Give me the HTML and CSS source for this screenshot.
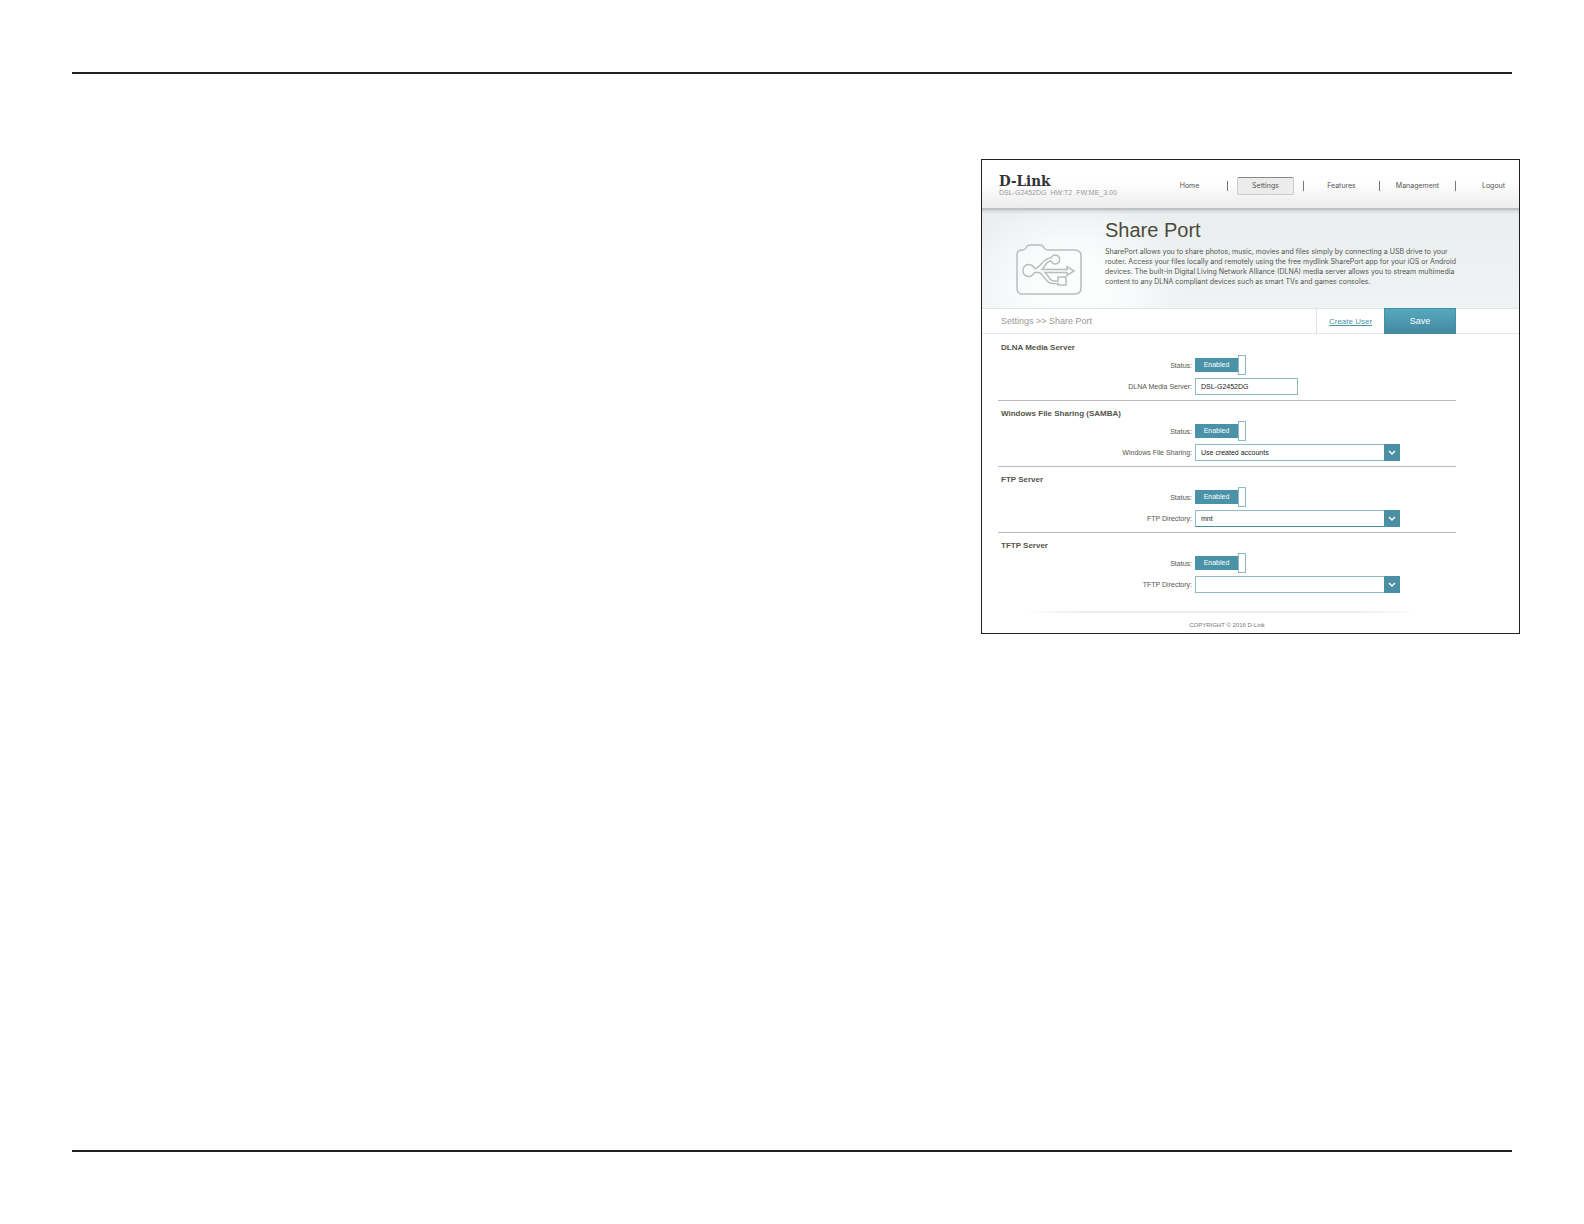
FILE: index.html
```html
<!DOCTYPE html>
<html lang="en">
<head>
<meta charset="utf-8">
<title>Share Port</title>
<link rel="stylesheet" href="styles.css">
</head>
<body>
<main class="sheet">
  <div class="panel">
    <header class="topbar">
      <div class="brand">
        <div class="logo">D-Link</div>
        <div class="device"><span>DSL-G2452DG</span><span>HW:T2</span><span>FW:ME_3.00</span></div>
      </div>
      <nav class="nav">
        <a href="#">Home</a>
        <a href="#" class="active"><span>Settings</span></a>
        <a href="#">Features</a>
        <a href="#">Management</a>
        <a href="#">Logout</a>
      </nav>
    </header>

    <section class="hero">
      <div class="hero-icon">
        <svg width="66" height="52" viewBox="0 0 66 52" fill="none" stroke="#b9bdbd" stroke-width="1.5">
          <path d="M1 11Q1 6 6 6H7Q9 6 10 4Q11 1 14 1H24Q27 1 28 4Q29 6 32 6H59Q65 6 65 12V44Q65 50 59 50H6Q1 50 1 44Z"/>
          <path d="M18.500 24.500C24 25 27 14 34 14H35A4.500 4.500 0 1 1 35 17C30 17 29 23 26 25.500H51V22.500L58 27L51 31.500V28.500H29C33 32 33 36 37 37H42V33H50V41H42V39.500H36C29 39 28 30 23 28.500H18.500A6 6 0 1 1 18.500 24.500Z"/>
        </svg>
      </div>
      <div class="hero-text">
        <h1>Share Port</h1>
        <p>SharePort allows you to share photos, music, movies and files simply by connecting a USB drive to your<br>router. Access your files locally and remotely using the free mydlink SharePort app for your iOS or Android<br>devices. The built-in Digital Living Network Alliance (DLNA) media server allows you to stream multimedia<br>content to any DLNA compliant devices such as smart TVs and games consoles.</p>
      </div>
    </section>

    <div class="toolbar">
      <div class="crumbs">Settings &gt;&gt; Share Port</div>
      <div class="create"><a href="#">Create User</a></div>
      <button class="save" type="button">Save</button>
    </div>

    <form class="settings">
      <section class="group">
        <h2>DLNA Media Server</h2>
        <div class="row status">
          <label for="dlna-on">Status:</label>
          <div class="toggle"><span>Enabled</span><input type="checkbox" id="dlna-on" checked></div>
        </div>
        <div class="row">
          <label for="dlna-name">DLNA Media Server:</label>
          <input class="text" type="text" id="dlna-name" value="DSL-G2452DG">
        </div>
      </section>
      <section class="group">
        <h2>Windows File Sharing (SAMBA)</h2>
        <div class="row status">
          <label for="smb-on">Status:</label>
          <div class="toggle"><span>Enabled</span><input type="checkbox" id="smb-on" checked></div>
        </div>
        <div class="row">
          <label for="smb-mode">Windows File Sharing:</label>
          <div class="select">
            <select id="smb-mode"><option>Use created accounts</option></select>
            <svg width="16" height="16" viewBox="0 0 16 16"><path d="M5 6.500L8 9.500L11 6.500" fill="none" stroke="#fff" stroke-width="1.400"/></svg>
          </div>
        </div>
      </section>
      <section class="group">
        <h2>FTP Server</h2>
        <div class="row status">
          <label for="ftp-on">Status:</label>
          <div class="toggle"><span>Enabled</span><input type="checkbox" id="ftp-on" checked></div>
        </div>
        <div class="row">
          <label for="ftp-dir">FTP Directory:</label>
          <div class="select focused">
            <select id="ftp-dir"><option>mnt</option></select>
            <svg width="16" height="16" viewBox="0 0 16 16"><path d="M5 6.500L8 9.500L11 6.500" fill="none" stroke="#fff" stroke-width="1.400"/></svg>
          </div>
        </div>
      </section>
      <section class="group">
        <h2>TFTP Server</h2>
        <div class="row status">
          <label for="tftp-on">Status:</label>
          <div class="toggle"><span>Enabled</span><input type="checkbox" id="tftp-on" checked></div>
        </div>
        <div class="row">
          <label for="tftp-dir">TFTP Directory:</label>
          <div class="select">
            <select id="tftp-dir"><option></option></select>
            <svg width="16" height="16" viewBox="0 0 16 16"><path d="M5 6.500L8 9.500L11 6.500" fill="none" stroke="#fff" stroke-width="1.400"/></svg>
          </div>
        </div>
      </section>
    </form>

    <footer class="foot">COPYRIGHT © 2016 D-Link</footer>
  </div>
</main>
</body>
</html>
```
FILE: styles.css
```css
* { box-sizing: border-box; }

body {
  margin: 0;
  padding: 72px;
  min-height: 100vh;
  display: flex;
  background: #fff;
  color: #55554c;
  font-family: "Liberation Sans", Arial, sans-serif;
  font-size: 7px;
}

h1, h2, p { margin: 0; font-weight: normal; }

.sheet {
  flex: 1;
  display: flex;
  justify-content: flex-end;
  align-items: flex-start;
  padding-top: 85px;
  border-top: 2px solid #231f20;
  border-bottom: 2px solid #231f20;
}

.panel {
  width: 100%;
  max-width: 539px;
  margin-right: -8px;
  border: 1px solid #231f20;
}

/* Top bar */
.topbar {
  display: flex;
  justify-content: space-between;
  height: 50px;
  padding-left: 17px;
  background: linear-gradient(#fff 45%, #ececec);
  border-bottom: 2px solid #bfc1c1;
}
.brand { padding-top: 14px; }
.logo {
  font: bold 15px/15px "DejaVu Serif Condensed", "DejaVu Serif", serif;
  color: #333;
}
.device {
  display: flex;
  gap: 4px;
  line-height: 8px;
  color: #999;
}
.nav {
  display: flex;
  align-items: center;
  padding-top: 4px;
}
.nav a {
  width: 76px;
  line-height: 10px;
  border-right: 1px solid #777;
  color: #555;
  font-family: Inter, "Liberation Sans", sans-serif;
  font-size: 7px;
  text-align: center;
  text-decoration: none;
}
.nav a:last-child { width: 63px; border-right: 0; padding-left: 12px; }
.nav .active span {
  display: block;
  margin: -4px 9px;
  padding: 3px 0;
  border: 1px solid #ccc;
  border-top-color: #888;
  border-radius: 2px;
  background: #ececec;
}

/* Hero */
.hero {
  display: flex;
  height: 98px;
  background:
    linear-gradient(rgba(190, 198, 200, 0.6), transparent 4px),
    radial-gradient(ellipse 110px 90px at 90px 75px, #fcfefe 30%, transparent),
    linear-gradient(#eaeeef, #eff3f4);
}
.hero-icon { width: 123px; padding: 34px 0 0 34px; }
.hero-text { padding-top: 9px; white-space: nowrap; }
.hero h1 { font-size: 20px; line-height: 22px; color: #4a4a3c; }
.hero p {
  padding-top: 6px;
  font-family: Inter, "Liberation Sans", sans-serif;
  font-size: 7px;
  line-height: 10px;
}

/* Breadcrumb bar */
.toolbar {
  display: flex;
  align-items: stretch;
  height: 26px;
  padding: 0 63px 0 19px;
  border-top: 1px solid #dfe5e6;
  border-bottom: 1px solid #e4e8e8;
}
.crumbs { flex: 1; font-size: 9px; line-height: 24px; color: #999; }
.create {
  width: 68px;
  border-left: 1px solid #dfe5e6;
  font-size: 8px;
  line-height: 26px;
  text-align: center;
}
.create a { color: #4a96a6; }
.save {
  width: 72px;
  margin: -1px 0;
  padding: 0;
  border: 1px solid #4490a6;
  background: linear-gradient(#56a9bf, #4488a0);
  color: #fff;
  font: 9px "Liberation Sans", Arial, sans-serif;
}

/* Settings */
.settings { padding: 1px 63px 0 16px; }
.group {
  height: 66px;
  padding-top: 7px;
  border-bottom: 1px solid #b9b9b9;
}
.group:last-child { border-bottom: 0; }
.group h2 {
  padding-left: 3px;
  font-size: 8px;
  font-weight: bold;
  line-height: 12px;
}
.row {
  display: grid;
  grid-template-columns: 194px auto;
  column-gap: 3px;
  align-items: center;
  justify-content: start;
  height: 17px;
}
.row.status { height: 20px; margin: 1px 0 3px; }
.row label { text-align: right; }
.toggle { display: flex; align-items: center; }
.toggle span {
  width: 43px;
  background: #4a92a8;
  color: #fff;
  line-height: 14px;
  text-align: center;
}
.toggle input {
  appearance: none;
  width: 8px;
  height: 20px;
  margin: 0;
  border: 1px solid #8cb9c4;
  background: #fff;
}
.text, .select {
  height: 17px;
  border: 1px solid #8fbcc4;
  background: #fff;
}
.text {
  width: 103px;
  padding: 0 5px;
  color: #222;
  font: 7px "Liberation Sans", Arial, sans-serif;
}
.select { display: flex; width: 205px; }
.select.focused { border-bottom-color: #4a8fa3; }
.select select {
  appearance: none;
  flex: 1;
  padding: 0 5px;
  border: 0;
  background: none;
  color: #222;
  font: 7px "Liberation Sans", Arial, sans-serif;
}
.select svg { margin: -1px -1px -1px 0; height: 17px; background: #4a8fa3; }

/* Footer */
.foot {
  margin: 12px 101px 0 44px;
  padding: 7px 0 3px 10px;
  border-top: 2px solid;
  border-image: linear-gradient(90deg, #fff, #ededed 15%, #ededed 85%, #fff) 1;
  border-bottom: 0;
  color: #777;
  font-size: 6px;
  line-height: 10px;
  text-align: center;
}
```
